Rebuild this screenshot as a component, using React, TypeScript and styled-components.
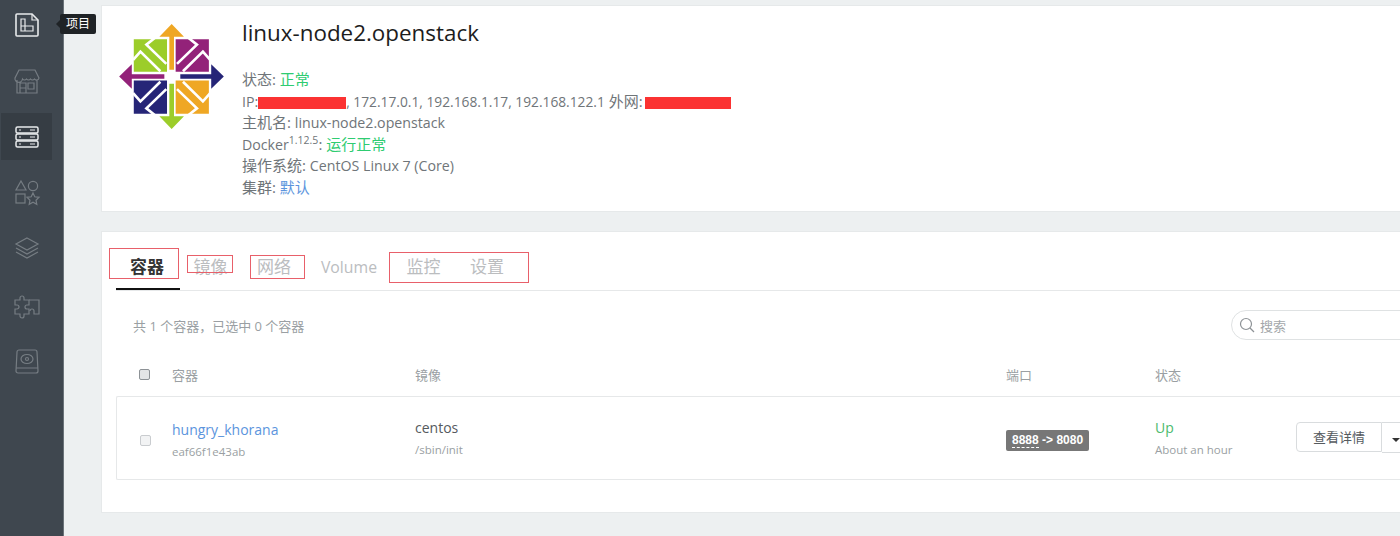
import React from "react";
import styled, { createGlobalStyle } from "styled-components";

const FONT = `"Open Sans", "Noto Sans CJK SC", sans-serif`;

const GlobalStyle = createGlobalStyle`
  html, body {
    margin: 0;
    padding: 0;
    height: 536px;
    overflow: hidden;
    background: #edf0f1;
    font-family: ${FONT};
  }
`;

const Page = styled.div`
  display: flex;
  width: 1400px;
  height: 536px;
  overflow: hidden;
`;

const Sidebar = styled.nav`
  flex: 0 0 64px;
  height: 536px;
  box-sizing: border-box;
  background: #3f474f;
  border-right: 1px solid #6b7379;
  display: flex;
  flex-direction: column;
  padding: 1px 0 0 1px;
  margin-right: 37px;
`;

const NavItem = styled.div<{ $active?: boolean; $lit?: boolean }>`
  position: relative;
  width: 51px;
  height: 47px;
  margin-bottom: 9px;
  display: flex;
  align-items: center;
  justify-content: center;
  background: ${(p) => (p.$active ? "#363d44" : "transparent")};
  color: ${(p) => (p.$active || p.$lit ? "#e8eaec" : "#767d83")};
`;

const Tooltip = styled.div`
  position: absolute;
  left: 59px;
  top: 13px;
  height: 20px;
  padding: 0 6px;
  background: #1f2326;
  border-radius: 2px;
  color: #fff;
  font-size: 12px;
  line-height: 20px;
  white-space: nowrap;
  &::before {
    content: "";
    position: absolute;
    left: -4px;
    top: 6px;
    border-style: solid;
    border-width: 4px 4px 4px 0;
    border-color: transparent #1f2326 transparent transparent;
  }
`;

const Main = styled.main`
  flex: 0 0 1340px;
  padding-top: 5px;
`;

const HostCard = styled.section`
  height: 207px;
  box-sizing: border-box;
  background: #fff;
  border: 1px solid #e6e9ea;
  display: flex;
  padding: 11px 0 0 17px;
  margin-bottom: 19px;
`;

const LogoBox = styled.div`
  flex: 0 0 123px;
  padding-top: 7px;
`;

const HostInfo = styled.div`
  display: flex;
  flex-direction: column;
`;

const HostName = styled.h1`
  margin: 0 0 20px;
  font-size: 22.4px;
  line-height: 32px;
  font-weight: 400;
  color: #1c1c1c;
`;

const InfoLine = styled.div`
  font-size: 15px;
  line-height: 21.5px;
  height: 21.5px;
  color: #6f7579;
  white-space: nowrap;
  sup {
    font-size: 10.5px;
    line-height: 0;
  }
`;

const Latin = styled.span`
  font-size: 14.2px;
`;

const Addr = styled.span`
  font-size: 13.78px;
`;

const Ok = styled.span`
  color: #2ecc71;
`;

const Link = styled.span`
  color: #5b94dd;
`;

const Redact = styled.span<{ $w: number; $gap?: number }>`
  display: inline-block;
  width: ${(p) => p.$w}px;
  margin-left: ${(p) => p.$gap ?? 0}px;
  height: 12px;
  background: #fb3232;
  vertical-align: -2px;
`;

const ListCard = styled.section`
  position: relative;
  height: 282px;
  box-sizing: border-box;
  background: #fff;
  border: 1px solid #e6e9ea;
  padding: 14px 0 0 14px;
`;

const Tabs = styled.div`
  display: flex;
  height: 44px;
  border-bottom: 1px solid #e6e8e9;
`;

const Tab = styled.div<{ $active?: boolean; $w: number; $latin?: boolean }>`
  width: ${(p) => p.$w}px;
  height: 44px;
  box-sizing: border-box;
  padding-right: 2px;
  text-align: center;
  font-size: ${(p) => (p.$latin ? "15.8px" : "17px")};
  line-height: 42px;
  color: ${(p) => (p.$active ? "#333" : "#bbbdbf")};
  font-weight: ${(p) => (p.$active ? 700 : 400)};
  border-bottom: ${(p) => (p.$active ? "2px solid #111" : "none")};
`;

const Annotation = styled.div<{ $l: number; $t: number; $w: number; $h: number }>`
  position: absolute;
  left: ${(p) => p.$l}px;
  top: ${(p) => p.$t}px;
  width: ${(p) => p.$w}px;
  height: ${(p) => p.$h}px;
  box-sizing: border-box;
  border: 1px solid #e8606a;
`;

const Toolbar = styled.div`
  display: flex;
  align-items: center;
  justify-content: space-between;
  height: 34px;
  margin-top: 17px;
  padding-left: 17px;
`;

const Count = styled.div`
  font-size: 13px;
  color: #9a9fa3;
`;

const Search = styled.div`
  width: 240px;
  margin-right: -31px;
  height: 30px;
  box-sizing: border-box;
  border: 1px solid #dfe2e3;
  border-radius: 15px;
  display: flex;
  align-items: center;
  gap: 5px;
  padding-left: 7px;
  font-size: 13px;
  color: #a3a7aa;
`;

const HeadRow = styled.div`
  display: grid;
  grid-template-columns: 56px 243px 591px 149px 1fr;
  align-items: center;
  height: 40px;
  box-sizing: border-box;
  padding-bottom: 3px;
  margin-top: 14px;
  font-size: 13px;
  color: #9a9fa3;
`;

const CheckCell = styled.div`
  padding-left: 23px;
  display: flex;
`;

const Check = styled.span<{ $dark?: boolean }>`
  display: inline-block;
  box-sizing: border-box;
  width: 11px;
  height: 11px;
  border-radius: 2px;
  border: 1px solid ${(p) => (p.$dark ? "#8d9296" : "#c9cccf")};
  background: ${(p) => (p.$dark ? "#e3e5e6" : "#f2f3f4")};
`;

const Row = styled.div`
  display: grid;
  grid-template-columns: 55px 243px 591px 149px 1fr;
  align-items: center;
  height: 84px;
  box-sizing: border-box;
  padding-top: 5px;
  border: 1px solid #e6e8e9;
  border-right: none;
  border-radius: 2px 0 0 2px;
`;

const Stack = styled.div<{ $lift?: boolean }>`
  padding-bottom: ${(p) => (p.$lift ? "4px" : "0")};
`;

const Primary = styled.div<{ $blue?: boolean; $green?: boolean }>`
  font-size: 14px;
  line-height: 20px;
  color: ${(p) => (p.$blue ? "#5b94dd" : p.$green ? "#4dbb6e" : "#555a5e")};
`;

const Secondary = styled.div`
  font-size: 11.5px;
  line-height: 18px;
  margin-top: 3px;
  color: #9a9fa3;
  white-space: nowrap;
`;

const PortBadge = styled.div`
  display: inline-flex;
  align-items: center;
  width: 83px;
  height: 21px;
  box-sizing: border-box;
  padding: 0 6px;
  vertical-align: top;
  background: #777;
  border-radius: 2px;
  color: #fff;
  font-family: "Liberation Sans", sans-serif;
  font-size: 12px;
  font-weight: 700;
  white-space: pre;
  span {
    border-bottom: 1px dashed #fff;
    line-height: 13px;
    margin-top: 2px;
  }
`;

const StatusCell = styled.div`
  display: grid;
  grid-template-columns: 141px auto;
  align-items: center;
`;

const Actions = styled.div`
  display: flex;
  height: 31px;
  padding-bottom: 7px;
`;

const ActionButton = styled.div`
  width: 86px;
  height: 30px;
  box-sizing: border-box;
  border: 1px solid #d9dcde;
  border-radius: 4px 0 0 4px;
  text-align: center;
  line-height: 28px;
  font-size: 13px;
  color: #555a5e;
`;

const Caret = styled.div`
  width: 40px;
  height: 31px;
  box-sizing: border-box;
  border: 1px solid #d9dcde;
  border-left: none;
  position: relative;
  &::after {
    content: "";
    position: absolute;
    left: 10px;
    top: 15px;
    border-style: solid;
    border-width: 4px 4px 0;
    border-color: #333 transparent transparent;
  }
`;

const Icon = styled.svg.attrs({
  fill: "none",
  stroke: "currentColor",
  strokeWidth: 1.2,
  viewBox: "0 0 28 28",
})`
  width: 28px;
  height: 28px;
`;

const CentosLogo = () => (
  <svg width="105" height="105" viewBox="28 42 315 316">
    <path d="M72 88h100v98H72z" fill="#9ccd2a" />
    <path d="M198 88h100v98H198z" fill="#932279" />
    <path d="M72 212h100v100H72z" fill="#262577" />
    <path d="M198 212h100v100H198z" fill="#efa724" />
    <path d="M186 42l37 38h-30v100h-14V80h-30z" fill="#efa724" />
    <path d="M343 200l-38 37v-30H212v-14h93v-30z" fill="#262577" />
    <path d="M186 358l-37-38h30V222h14v98h30z" fill="#9ccd2a" />
    <path d="M28 200l38-37v30h98v14H66v30z" fill="#932279" />
    <g fill="none" stroke="#fff" strokeWidth="8">
      <path d="M170 162L110 104 135 84M152 184L92 125 70 150" />
      <path d="M202 162L262 104 237 84M220 184L280 125 302 150" />
      <path d="M170 238L110 296 135 316M152 216L92 275 70 250" />
      <path d="M202 238L262 296 237 316M220 216L280 275 302 250" />
    </g>
  </svg>
);

export default function App() {
  return (
    <Page>
      <GlobalStyle />
      <Sidebar>
        <NavItem $lit>
          <Icon>
            <path d="M4 3h15l6 6v15a1 1 0 0 1-1 1H4a1 1 0 0 1-1-1V4a1 1 0 0 1 1-1z" strokeWidth="1.6" />
            <path d="M19 3v6h6M8 8h4v7h8v5H8zM8 15h4v5" />
          </Icon>
          <Tooltip>项目</Tooltip>
        </NavItem>
        <NavItem>
          <Icon>
            <path d="M6 3h16l4 8a2.5 2.5 0 0 1-4.5 1 2.5 2.5 0 0 1-4 0 2.5 2.5 0 0 1-4 0 2.5 2.5 0 0 1-4 0A2.5 2.5 0 0 1 2 11zM4 13v13h20V13M7 16h6v10H7zM15 16h6v6h-6zM7 21h6" />
          </Icon>
        </NavItem>
        <NavItem $active>
          <Icon>
            <rect x="3" y="4" width="22" height="6" rx="1.5" strokeWidth="1.5" />
            <rect x="3" y="11" width="22" height="6" rx="1.5" strokeWidth="1.5" />
            <rect x="3" y="18" width="22" height="6" rx="1.5" strokeWidth="1.5" />
            <path d="M6 7h2M6 14h2M6 21h2M17 7h5M17 14h5M17 21h5" />
          </Icon>
        </NavItem>
        <NavItem>
          <Icon>
            <path d="M8 2l5 9H3z" />
            <circle cx="20" cy="7" r="4.6" />
            <rect x="3" y="15" width="9" height="9" />
            <path d="M20 14l1.8 3.8 4.2.5-3 2.9.8 4.1-3.8-2.1-3.8 2.1.8-4.1-3-2.9 4.2-.5z" />
          </Icon>
        </NavItem>
        <NavItem>
          <Icon>
            <path d="M14 3l11 6-11 6-11-6zM3 13l11 6 11-6M3 17l11 6 11-6" />
          </Icon>
        </NavItem>
        <NavItem>
          <Icon>
            <path d="M2 9h5V7a2 2 0 1 1 4 0v2h5v5h-2a2 2 0 1 0 0 4h2v5h-5v2a2 2 0 1 1-4 0v-2H2v-5h2a2 2 0 1 0 0-4H2z" />
            <path d="M16 9h10v14h-5v-3a2 2 0 1 0-4 0" />
          </Icon>
        </NavItem>
        <NavItem>
          <Icon>
            <path d="M6 3h16a2 2 0 0 1 2 2l1 19a2 2 0 0 1-2 2H5a2 2 0 0 1-2-2L4 5a2 2 0 0 1 2-2zM3 21h22" />
            <ellipse cx="14" cy="12" rx="6" ry="4.5" />
            <circle cx="14" cy="12" r="1.5" />
          </Icon>
        </NavItem>
      </Sidebar>
      <Main>
        <HostCard>
          <LogoBox>
            <CentosLogo />
          </LogoBox>
          <HostInfo>
            <HostName>linux-node2.openstack</HostName>
            <InfoLine>
              状态: <Ok>正常</Ok>
            </InfoLine>
            <InfoLine>
              <Latin>IP:</Latin>
              <Redact $w={88} />
              <Addr>, 172.17.0.1, 192.168.1.17, 192.168.122.1</Addr> 外网:
              <Redact $w={86} $gap={2} />
            </InfoLine>
            <InfoLine>
              主机名: <Latin>linux-node2.openstack</Latin>
            </InfoLine>
            <InfoLine>
              <Latin>Docker</Latin>
              <sup>1.12.5</sup>: <Ok>运行正常</Ok>
            </InfoLine>
            <InfoLine>
              操作系统: <Latin>CentOS Linux 7 (Core)</Latin>
            </InfoLine>
            <InfoLine>
              集群: <Link>默认</Link>
            </InfoLine>
          </HostInfo>
        </HostCard>
        <ListCard>
          <Annotation $l={7} $t={16} $w={70} $h={31} />
          <Annotation $l={85} $t={23} $w={46} $h={18} />
          <Annotation $l={148} $t={23} $w={55} $h={24} />
          <Annotation $l={287} $t={20} $w={140} $h={31} />
          <Tabs>
            <Tab $active $w={64}>容器</Tab>
            <Tab $w={63}>镜像</Tab>
            <Tab $w={64}>网络</Tab>
            <Tab $latin $w={86}>Volume</Tab>
            <Tab $w={63}>监控</Tab>
            <Tab $w={64}>设置</Tab>
          </Tabs>
          <Toolbar>
            <Count>共 1 个容器，已选中 0 个容器</Count>
            <Search>
              <svg width="16" height="16" viewBox="0 0 16 16" fill="none" stroke="#8d9296" strokeWidth="1.2">
                <circle cx="7" cy="7" r="5.5" />
                <path d="M11 11l4 4" />
              </svg>
              搜索
            </Search>
          </Toolbar>
          <HeadRow>
            <CheckCell>
              <Check $dark />
            </CheckCell>
            <div>容器</div>
            <div>镜像</div>
            <div>端口</div>
            <div>状态</div>
          </HeadRow>
          <Row>
            <CheckCell>
              <Check />
            </CheckCell>
            <Stack>
              <Primary $blue>hungry_khorana</Primary>
              <Secondary>eaf66f1e43ab</Secondary>
            </Stack>
            <Stack $lift>
              <Primary>centos</Primary>
              <Secondary>/sbin/init</Secondary>
            </Stack>
            <div>
              <PortBadge>
                <span>8888</span> -&gt; 8080
              </PortBadge>
            </div>
            <StatusCell>
              <Stack $lift>
                <Primary $green>Up</Primary>
                <Secondary>About an hour</Secondary>
              </Stack>
              <Actions>
                <ActionButton>查看详情</ActionButton>
                <Caret />
              </Actions>
            </StatusCell>
          </Row>
        </ListCard>
      </Main>
    </Page>
  );
}
